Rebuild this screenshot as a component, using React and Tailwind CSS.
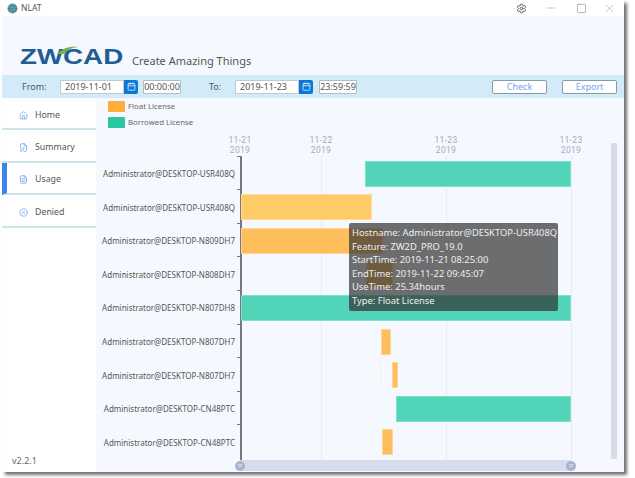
import { Settings, Minus, Square, X, Home, FilePen, FileText, CircleX, Calendar } from 'lucide-react';

const FONT = "font-['Noto_Sans',sans-serif]";

const navItems = [
  { label: 'Home', Icon: Home },
  { label: 'Summary', Icon: FilePen },
  { label: 'Usage', Icon: FileText, active: true },
  { label: 'Denied', Icon: CircleX },
];

const GREEN = 'bg-[#52d4b9] border-[#7ce0cb]';
const ORANGE = 'bg-[#ffcb66] border-[#ffdc99]';
const AMBER = 'bg-[#ffbe5c] border-[#ffd596]';

// start/end are pixel offsets inside the 331px plot
const rows = [
  { host: 'Administrator@DESKTOP-USR408Q', bars: [{ from: 125, to: 331, tone: GREEN }] },
  { host: 'Administrator@DESKTOP-USR408Q', bars: [{ from: 1, to: 132, tone: ORANGE }] },
  { host: 'Administrator@DESKTOP-N809DH7', bars: [{ from: 1, to: 143, tone: AMBER }] },
  { host: 'Administrator@DESKTOP-N808DH7', bars: [{ from: 126, to: 153, tone: AMBER }] },
  { host: 'Administrator@DESKTOP-N807DH8', bars: [{ from: 1, to: 331, tone: GREEN }] },
  { host: 'Administrator@DESKTOP-N807DH7', bars: [{ from: 141, to: 151, tone: AMBER }] },
  {
    host: 'Administrator@DESKTOP-N807DH7',
    bars: [
      { from: 140, to: 142, tone: 'bg-[#f3f0ea] border-[#f6f4ef]' },
      { from: 152, to: 158, tone: AMBER },
    ],
  },
  { host: 'Administrator@DESKTOP-CN48PTC', bars: [{ from: 156, to: 331, tone: GREEN }] },
  { host: 'Administrator@DESKTOP-CN48PTC', bars: [{ from: 142, to: 153, tone: AMBER }] },
];

const ticks = [
  { left: 0, label: '11-21' },
  { left: 81, label: '11-22' },
  { left: 206, label: '11-23' },
  { left: 331, label: '11-23' },
];

const tooltipLines = [
  'Hostname: Administrator@DESKTOP-USR408Q',
  'Feature: ZW2D_PRO_19.0',
  'StartTime: 2019-11-21 08:25:00',
  'EndTime: 2019-11-22 09:45:07',
  'UseTime: 25.34hours',
  'Type: Float License',
];

const DateField = ({ date, time, gapClass }) => (
  <div className="flex items-center">
    <div className="w-[64px] h-[14px] bg-white border border-[#c4c9ce] rounded-l-[1px] pl-[4px] text-[9px] leading-[12px] text-[#555]">
      {date}
    </div>
    <div className="w-[14px] h-[14px] bg-[#0b78d8] rounded-r-[2px] flex items-center justify-center">
      <Calendar size={9} color="#dbeeff" strokeWidth={2.2} />
    </div>
    <div className={`${gapClass} w-[38px] h-[14px] bg-white border border-[#b5bbc0] rounded-[1px] text-center text-[9px] leading-[12px] text-[#555]`}>
      {time}
    </div>
  </div>
);

const SliderHandle = ({ side }) => (
  <div className={`absolute ${side} top-[1px] w-[10px] h-[10px] rounded-full bg-[#a3b5d0] flex flex-col items-center justify-center gap-px`}>
    <div className="w-[4px] h-px bg-[#d6dce9]" />
    <div className="w-[4px] h-px bg-[#d6dce9]" />
  </div>
);

const App = () => {
  return (
    <div className={`w-[635px] h-[478px] bg-white overflow-hidden ${FONT}`}>
      <div className="ml-[2px] w-[622px] h-[472px] flex flex-col bg-white shadow-[3px_3px_3px_rgba(0,0,0,0.55)]">
        {/* Title bar */}
        <div className="h-[16px] shrink-0 bg-white flex items-center pl-[5px]">
          <svg viewBox="0 0 12 12" width="11" height="11">
            <circle cx="6" cy="6" r="5.5" fill="#5b9aa6" />
            <circle cx="6" cy="6" r="2" fill="#d5e6ea" />
            <path d="M1 6h10M6 1v10M2.5 2.5l7 7M9.5 2.5l-7 7" stroke="#2f7482" strokeWidth="0.7" />
          </svg>
          <span className="ml-[3px] text-[8.5px] text-[#555]">NLAT</span>
          <div className="ml-auto flex items-center">
            <Settings size={11} color="#555" />
            <Minus size={12} color="#888" strokeWidth={1} className="ml-[18px]" />
            <Square size={11} color="#777" strokeWidth={1.2} className="ml-[19px]" />
            <X size={13} color="#999" strokeWidth={1} className="ml-[16px] mr-[8px]" />
          </div>
        </div>

        {/* Logo strip */}
        <div className="h-[59px] shrink-0 bg-[#f5f9ff] flex items-end pl-[18px] pb-[6px]">
          <div className="w-[108px] h-[24px] relative">
            <span className="block origin-left scale-x-[1.26] font-['Liberation_Sans',sans-serif] font-bold text-[22px] leading-[24px] text-[#1f5d94]">
              ZWCAD
            </span>
            <svg viewBox="0 0 24 10" width="22" height="9" className="absolute left-[36px] top-[1px]">
              <path d="M1 9C7 2 15 0 24 1 17 2 12 4 8 9Z" fill="#6fb344" />
            </svg>
          </div>
          <span className="ml-[4px] text-[11px] leading-[16px] text-[#555]">Create Amazing Things</span>
        </div>

        {/* Date filter bar */}
        <div className="h-[23px] shrink-0 bg-[#d3ebf9] flex items-center text-[9px] text-[#555]">
          <span className="ml-[20px] w-[38px]">From:</span>
          <DateField date="2019-11-01" time="00:00:00" gapClass="ml-[5px]" />
          <span className="ml-[28px] w-[26px]">To:</span>
          <DateField date="2019-11-23" time="23:59:59" gapClass="ml-[6px]" />
          <button className="ml-[135px] w-[55px] h-[14px] bg-white border border-[#8b98a5] rounded-[2px] text-[9px] leading-[12px] text-[#6ea5f5]">Check</button>
          <button className="ml-[15px] w-[55px] h-[14px] bg-white border border-[#8b98a5] rounded-[2px] text-[9px] leading-[12px] text-[#6ea5f5]">Export</button>
        </div>

        <div className="flex-1 flex min-h-0">
          {/* Sidebar */}
          <div className="w-[94px] shrink-0 bg-white flex flex-col text-[8.8px] text-[#555]">
            {navItems.map(({ label, Icon, active }) => (
              <div
                key={label}
                className={`h-[32.4px] pt-[4px] flex items-center border-b-2 border-[#d0e2ea] ${active ? 'border-l-[5px] border-l-[#3d82ee] pl-[12px]' : 'pl-[17px]'}`}
              >
                <Icon size={9} color="#6ea0ef" strokeWidth={2} />
                <span className="ml-[7px]">{label}</span>
              </div>
            ))}
            <span className="mt-auto mb-[5px] ml-[10px] text-[9px] text-[#666]">v2.2.1</span>
          </div>

          {/* Usage chart */}
          <div className="flex-1 bg-[#f5f9ff] flex flex-col relative">
            <div className="pl-[12px] pt-[3px] flex flex-col gap-[5px] text-[7.8px] leading-[11px] text-[#666]">
              <div className="flex items-center gap-[3px]">
                <div className="w-[17px] h-[11px] bg-[#ffae3b] rounded-[1px]" />
                <span>Float License</span>
              </div>
              <div className="flex items-center gap-[3px]">
                <div className="w-[17px] h-[11px] bg-[#2bc7a5] rounded-[1px]" />
                <span>Borrowed License</span>
              </div>
            </div>

            <div className="ml-[144px] w-[331px] h-[29px] relative">
              {ticks.map((tick) => (
                <div
                  key={tick.left}
                  className="absolute top-[7px] -translate-x-1/2 text-center font-['Roboto',sans-serif] text-[8.5px] leading-[10px] tracking-[0.3px] whitespace-nowrap text-[#a5a8c8]"
                  style={{ left: tick.left }}
                >
                  <div>{tick.label}</div>
                  <div>2019</div>
                </div>
              ))}
            </div>

            <div className="flex">
              {/* Host labels */}
              <div className="w-[139px] shrink-0 pt-[1.5px] flex flex-col">
                {rows.map((row, i) => (
                  <div key={i} className="h-[33.6px] flex items-center justify-end text-[8px] text-[#555] whitespace-nowrap">
                    {row.host}
                  </div>
                ))}
              </div>

              {/* Plot */}
              <div className="ml-[5px] w-[331px] relative border-l-2 border-[#777]">
                {ticks.slice(1).map((tick) => (
                  <div key={tick.left} className="absolute top-0 bottom-0 w-px bg-[#e6ebf4]" style={{ left: tick.left - 2 }} />
                ))}
                {rows.map((row, i) => (
                  <div key={i} className="h-[33.6px] relative">
                    <div className="absolute left-[-5px] top-0 w-[3px] h-px bg-[#777]" />
                    {row.bars.map((bar) => (
                      <div
                        key={bar.from}
                        className={`absolute top-[5px] h-[26px] border ${bar.tone}`}
                        style={{ left: bar.from - 2, width: bar.to - bar.from }}
                      />
                    ))}
                  </div>
                ))}
              </div>
            </div>

            {/* Zoom slider */}
            <div className="ml-[144px] w-[331px] h-[12px] mt-auto mb-px bg-[#d6dce9] relative">
              <SliderHandle side="left-[-5px]" />
              <SliderHandle side="right-[-5px]" />
            </div>

            {/* Vertical slider */}
            <div className="absolute left-[515px] top-[45px] bottom-[13px] w-[6px] bg-[#d6dce9]" />

            {/* Tooltip */}
            <div className="absolute left-[253px] top-[125px] w-[209px] h-[88px] bg-[rgba(50,50,50,0.7)] rounded-[2px] pl-[3px] pt-[3px] text-[9.4px] leading-[13.6px] whitespace-nowrap text-[#eee]">
              {tooltipLines.map((line) => (
                <div key={line}>{line}</div>
              ))}
            </div>
          </div>
        </div>
      </div>
    </div>
  );
};

export default App;
